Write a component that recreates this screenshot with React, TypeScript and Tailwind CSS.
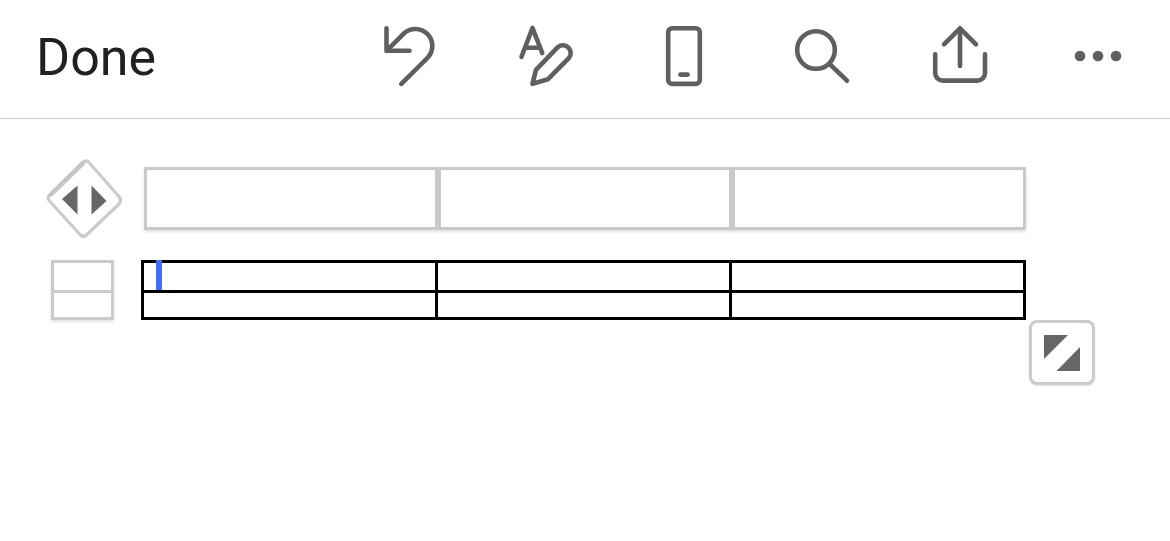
import React from 'react';

interface ToolButtonProps {
  label: string;
  children: React.ReactNode;
}

const ToolButton: React.FC<ToolButtonProps> = ({ label, children }) => (
  <button type="button" aria-label={label} className="size-18 shrink-0 text-[#5f5f5f]">
    <svg
      viewBox="0 0 72 72"
      className="size-18"
      fill="none"
      stroke="currentColor"
      strokeWidth="4.6"
      strokeLinecap="round"
      strokeLinejoin="round"
    >
      {children}
    </svg>
  </button>
);

const Toolbar: React.FC = () => (
  <header className="flex items-start justify-between border-b border-[#c8c8c8] pt-5 pr-[35px] pb-[22px] pl-9">
    <button type="button" className="text-[52px] leading-[76px] text-[#212121]">
      Done
    </button>
    <div className="flex gap-[66px]">
      <ToolButton label="Undo">
        <path d="M13.5 8.3V30.8H36.5M13.5 30.8L31 13.3A17 17 0 0 1 55 37.3L28.3 63.8" />
      </ToolButton>
      <ToolButton label="Format">
        <path d="M10.5 36.8L21.5 8L31.3 33.2M14.5 27.8H28.5" />
        <path d="M46.8 27.2A7.8 7.8 0 0 1 57.8 38.2L36.8 59.3L21.5 63.9L25 49.8Z" />
      </ToolButton>
      <ToolButton label="Mobile view">
        <rect x="19.2" y="8.3" width="31.6" height="55.6" rx="4" />
        <path d="M31.4 54.6H38.6" />
      </ToolButton>
      <ToolButton label="Search">
        <circle cx="29" cy="30" r="18.8" />
        <path d="M42.5 43.8L60 60.7" />
      </ToolButton>
      <ToolButton label="Share">
        <path d="M35 8.3V46M19 24.3L35 8.3L51 24.3" />
        <path d="M10.2 34.3V53a7.6 7.6 0 0 0 7.6 7.6H52.4a7.6 7.6 0 0 0 7.6 -7.6V34.3" />
      </ToolButton>
      <ToolButton label="More">
        <g fill="currentColor" stroke="none">
          <circle cx="17" cy="36" r="5.3" />
          <circle cx="35" cy="36" r="5.3" />
          <circle cx="53" cy="36" r="5.3" />
        </g>
      </ToolButton>
    </div>
  </header>
);

const MoveHandle: React.FC = () => (
  <button type="button" aria-label="Move table" className="h-20 w-19 shrink-0">
    <svg viewBox="0 0 76 80" className="h-20 w-19">
      <path
        d="M36.5 4.5Q40 1.5 43 4.5L73 38.5Q76 42.5 73 46L41 76.5Q37.5 80 34 76.5L3.5 43Q0.5 39.5 4 36.5Z"
        fill="#fff"
        stroke="#cbcbcb"
        strokeWidth="3.2"
        strokeLinejoin="round"
      />
      <path d="M5 36.5L37 5.5" stroke="#c6c6c6" strokeWidth="4.4" strokeLinecap="round" />
      <path d="M16 41L31.5 27.5V56.5Z" fill="#666" />
      <path d="M45.5 27.5L60.5 43L45.5 56.5Z" fill="#666" />
    </svg>
  </button>
);

const columns = [1, 2, 3];

const TableEditor: React.FC = () => (
  <main className="pt-[39px]">
    <div className="flex items-center gap-[22px] pr-36 pl-[46px]">
      <MoveHandle />
      <div className="flex h-[63px] flex-1 shadow-[0_2px_3px_#0000001f]">
        {columns.map((col) => (
          <button
            key={col}
            type="button"
            aria-label={`Select column ${col}`}
            className="flex-1 border-3 border-[#c9c9c9] bg-white"
          />
        ))}
      </div>
    </div>

    <div className="mt-[22px] flex items-start gap-[27px] pr-36 pl-[51px]">
      <div className="flex w-[63px] shrink-0 flex-col shadow-[0_2px_3px_#0000001f]">
        <button type="button" aria-label="Select row 1" className="h-[33px] border-3 border-[#cbcbcb] bg-white" />
        <button
          type="button"
          aria-label="Select row 2"
          className="h-[27px] border-3 border-t-0 border-[#cbcbcb] bg-white"
        />
      </div>
      <table className="flex-1 table-fixed border-collapse" aria-label="Document table">
        <tbody>
          <tr className="h-[30px]">
            {columns.map((col) => (
              <td key={col} className="relative border-3 border-black p-0">
                {/* text caret */}
                {col === 1 && <span className="absolute -top-[3px] left-3 h-[30px] w-1.5 bg-[#456cf2]" />}
              </td>
            ))}
          </tr>
          <tr className="h-[27px]">
            {columns.map((col) => (
              <td key={col} className="border-3 border-black p-0" />
            ))}
          </tr>
        </tbody>
      </table>
    </div>

    <div className="flex justify-end pr-[75px]">
      <button
        type="button"
        aria-label="Resize table"
        className="flex h-[65px] w-[66px] items-center justify-center rounded-lg border-3 border-[#cbcbcb] bg-white shadow-[0_1px_2px_#0000001f]"
      >
        <svg viewBox="0 0 36 36" className="size-9" fill="#666">
          <path d="M0 0H24L0 24Z" />
          <path d="M36 12V36H12.5Z" />
        </svg>
      </button>
    </div>
  </main>
);

const App: React.FC = () => (
  <div className="min-h-screen bg-white font-['Roboto','Liberation_Sans',sans-serif]">
    <Toolbar />
    <TableEditor />
  </div>
);

export default App;
